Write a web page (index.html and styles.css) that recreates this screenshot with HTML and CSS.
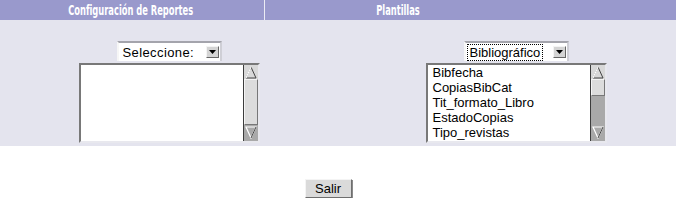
FILE: index.html
```html
<!DOCTYPE html>
<html lang="es">
<head>
<meta charset="utf-8">
<title>Reportes</title>
<link rel="stylesheet" href="styles.css">
</head>
<body>
<div class="header">
  <div class="hcell hleft"><span class="htext">Configuración de Reportes</span></div>
  <div class="hcell hright"><span class="htext">Plantillas</span></div>
</div>
<div class="panel">
  <div class="col col-left">
    <div class="combo">
      <span class="combo-text">Seleccione:</span>
      <span class="combo-btn"><svg width="7" height="4" viewBox="0 0 7 4"><path d="M0 0 H7 L3.5 4 Z" fill="#000"/></svg></span>
    </div>
    <div class="listbox">
      <div class="items"></div>
      <div class="sb">
        <div class="sb-up"><svg width="12" height="13" viewBox="0 0 12 13"><path d="M6 1 L1 12 H11 Z" fill="none" stroke="#444" stroke-width="1"/><path d="M6 1 L1 12" stroke="#fff" stroke-width="1.2"/></svg></div>
        <div class="sb-thumb thumb-left"></div>
        <div class="sb-track"></div>
        <div class="sb-down"><svg width="12" height="13" viewBox="0 0 12 13"><path d="M1 1 H11 L6 12 Z" fill="none" stroke="#fff" stroke-width="1.2"/><path d="M11 1 L6 12" stroke="#444" stroke-width="1"/></svg></div>
      </div>
    </div>
  </div>
  <div class="col col-right">
    <div class="combo">
      <span class="combo-text focused">Bibliográfico</span>
      <span class="combo-btn"><svg width="7" height="4" viewBox="0 0 7 4"><path d="M0 0 H7 L3.5 4 Z" fill="#000"/></svg></span>
    </div>
    <div class="listbox">
      <div class="items">
        <div class="item">Bibfecha</div>
        <div class="item">CopiasBibCat</div>
        <div class="item">Tit_formato_Libro</div>
        <div class="item">EstadoCopias</div>
        <div class="item">Tipo_revistas</div>
      </div>
      <div class="sb">
        <div class="sb-up"><svg width="12" height="13" viewBox="0 0 12 13"><path d="M6 1 L1 12 H11 Z" fill="none" stroke="#444" stroke-width="1"/><path d="M6 1 L1 12" stroke="#fff" stroke-width="1.2"/></svg></div>
        <div class="sb-thumb thumb-right"></div>
        <div class="sb-track"></div>
        <div class="sb-down"><svg width="12" height="13" viewBox="0 0 12 13"><path d="M1 1 H11 L6 12 Z" fill="none" stroke="#fff" stroke-width="1.2"/><path d="M11 1 L6 12" stroke="#444" stroke-width="1"/></svg></div>
      </div>
    </div>
  </div>
</div>
<div class="footer">
  <button class="btn" type="button">Salir</button>
</div>
</body>
</html>
```

FILE: styles.css
```css
html, body {
  margin: 0;
  padding: 0;
  background: #ffffff;
  font-family: "Liberation Sans", Arial, sans-serif;
}

.header {
  display: grid;
  grid-template-columns: 264px 1fr;
  height: 20px;
  background: #9999cc;
}

.hcell {
  display: flex;
  align-items: center;
  justify-content: center;
}

.hleft {
  padding-right: 3px;
}

.hright {
  border-left: 1px solid #ececf4;
  padding-right: 145px;
}

.htext {
  display: inline-block;
  color: #ffffff;
  font-family: "DejaVu Sans Condensed", "DejaVu Sans", sans-serif;
  font-stretch: condensed;
  font-weight: bold;
  font-size: 14px;
  line-height: 15px;
  transform: scaleX(0.66);
  white-space: nowrap;
}

.panel {
  display: grid;
  grid-template-columns: 338px 1fr;
  height: 126px;
  box-sizing: border-box;
  padding-top: 21px;
  background: #e4e4ee;
}

.col {
  display: flex;
  flex-direction: column;
  align-items: center;
}

.col-right {
  padding-left: 18px;
}

.combo {
  width: 105px;
  height: 20px;
  box-sizing: border-box;
  background: #ffffff;
  border-top: 2px solid #a4a4ac;
  border-left: 2px solid #f6f6f6;
  border-right: 2px solid #cfcfd6;
  display: flex;
  align-items: center;
  justify-content: space-between;
  padding: 0 1px 0 2px;
  margin-bottom: 2px;
}

.combo-text {
  font-size: 13px;
  line-height: 15px;
  color: #000;
  padding: 0 2px;
  letter-spacing: 0.4px;
}

.combo-text.focused {
  outline: 1px dotted #000;
  outline-offset: 0;
  letter-spacing: 0;
}

.combo-btn {
  width: 13px;
  height: 12px;
  box-sizing: border-box;
  background: #d4d4d4;
  border-top: 1px solid #f4f4f4;
  border-left: 1px solid #f4f4f4;
  border-right: 1px solid #666;
  border-bottom: 1px solid #666;
  display: flex;
  align-items: center;
  justify-content: center;
}

.listbox {
  width: 181px;
  height: 80px;
  box-sizing: border-box;
  background: #ffffff;
  border: 2px solid;
  border-color: #787878 #e8e8ee #e8e8ee #787878;
  display: flex;
}

.items {
  flex: 1;
  padding: 0 0 0 5px;
  overflow: hidden;
}

.item {
  font-size: 13px;
  line-height: 15px;
  color: #000;
  white-space: nowrap;
}

.sb {
  width: 14px;
  display: flex;
  flex-direction: column;
  background: #a9a9a9;
  border-left: 1px solid #3c3c3c;
}

.sb-up, .sb-down {
  display: flex;
  align-items: center;
  justify-content: center;
  flex: none;
}

.sb-up {
  height: 14px;
  background: #d8d8d8;
}

.sb-down {
  height: 14px;
  margin-bottom: 2px;
}

.sb-thumb {
  flex: none;
  box-sizing: border-box;
  background: #dcdcdc;
  border-top: 1px solid #f4f4f4;
  border-left: 1px solid #f4f4f4;
  border-right: 1px solid #777;
  border-bottom: 1px solid #777;
}

.thumb-left {
  height: 46px;
}

.thumb-right {
  height: 17px;
}

.sb-track {
  flex: 1;
}

.footer {
  padding-top: 33px;
  padding-right: 20px;
  text-align: center;
}

.btn {
  width: 47px;
  height: 19px;
  padding: 0;
  box-sizing: border-box;
  font-family: "Liberation Sans", Arial, sans-serif;
  font-size: 13px;
  line-height: 15px;
  color: #000;
  background: #dadada;
  border: 1px solid;
  border-color: #f4f4f4 #6e6e6e #6e6e6e #f4f4f4;
  box-shadow: 1px 1px 0 #8a8a8a;
}
```
